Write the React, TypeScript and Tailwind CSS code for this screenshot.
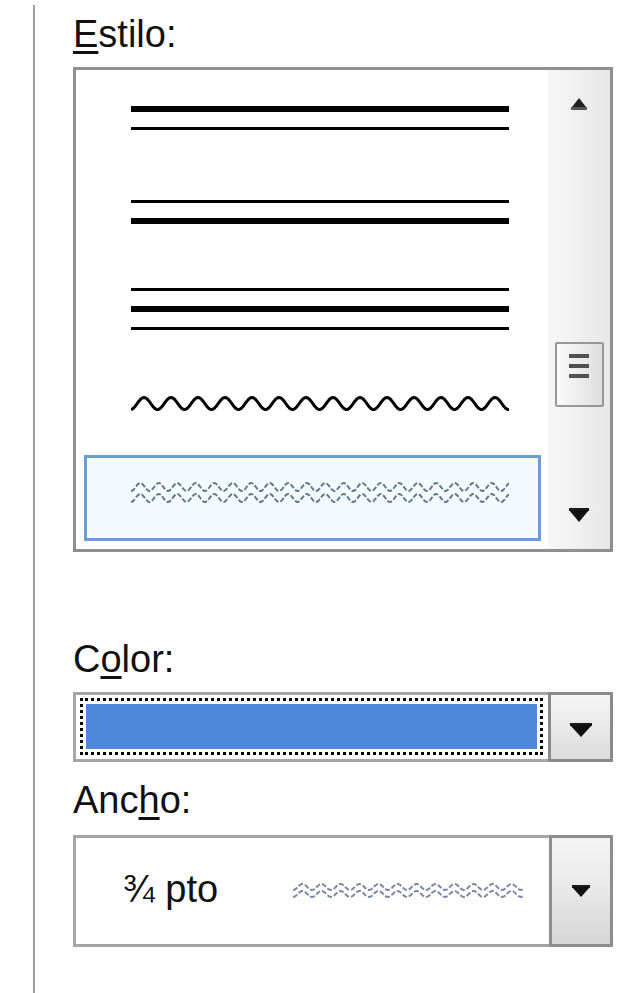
import React from 'react';

// builds a sine wave path for the border style previews
const wavePath = (width: number, period: number, amp: number, cy: number, peakAt: number) => {
  let d = '';
  for (let x = 0; x <= width; x += 1) {
    const y = cy - amp * Math.cos((2 * Math.PI * (x - peakAt)) / period);
    d += (x === 0 ? 'M' : 'L') + x + ' ' + y.toFixed(2) + ' ';
  }
  return d;
};

const ThinLine = () => <div className="h-[3px] w-[378px] bg-black" />;
const ThickLine = () => <div className="h-[6px] w-[378px] bg-black" />;

const DoubleWave: React.FC<{ width: number; height: number; period: number; amp: number; gap: number; color: string; stroke: number }> = ({
  width,
  height,
  period,
  amp,
  gap,
  color,
  stroke,
}) => {
  const top = amp + stroke / 2 + 1;
  return (
    <svg width={width} height={height} viewBox={`0 0 ${width} ${height}`}>
      <path d={wavePath(width, period, amp, top, period / 2)} fill="none" stroke={color} strokeWidth={stroke} strokeDasharray="5 2" />
      <path d={wavePath(width, period, amp, top + gap, period / 2)} fill="none" stroke={color} strokeWidth={stroke} strokeDasharray="5 2" />
    </svg>
  );
};

const DownTriangle: React.FC<{ w: number; h: number }> = ({ w, h }) => (
  <svg width={w} height={h} viewBox={`0 0 ${w} ${h}`}>
    <rect x={0} y={0} width={w} height={3} fill="#1a1a1a" />
    <polygon points={`0,2 ${w},2 ${w / 2},${h}`} fill="#111" />
  </svg>
);

export default function App() {
  return (
    <div className="w-[640px] h-[993px] bg-white flex font-['Liberation_Sans',Arial,sans-serif] text-[#111] overflow-hidden">
      <div className="ml-[33px] mt-[5px] flex-1 border-l-2 border-[#9e9e9e] pl-[38px] pr-[27px] pt-[10px]">
        {/* Estilo */}
        <div className="h-[38px] text-[38px] leading-none">
          <span className="underline decoration-[3px] underline-offset-[4px]">E</span>stilo:
        </div>

        <div className="mt-[14px] h-[485px] border-[3px] border-[#8f8f8f] flex">
          <div className="flex-1 flex flex-col pt-[1px]">
            <div className="h-[94px] flex flex-col justify-center pl-[55px] gap-[15px]">
              <ThickLine />
              <ThinLine />
            </div>
            <div className="h-[94px] flex flex-col justify-center pl-[55px] gap-[15px]">
              <ThinLine />
              <ThickLine />
            </div>
            <div className="h-[94px] flex flex-col justify-center pl-[55px] pt-[6px] gap-[15px]">
              <ThinLine />
              <ThickLine />
              <ThinLine />
            </div>
            <div className="h-[94px] flex items-center pl-[55px] pt-[7px]">
              <svg width={378} height={17} viewBox="0 0 378 17">
                <path d={wavePath(378, 27, 6, 8.5, 13)} fill="none" stroke="#000" strokeWidth={3} strokeLinejoin="round" />
              </svg>
            </div>
            <div className="pt-[8px] pl-[8px] pr-[7px]">
              <div className="h-[86px] border-[3px] border-[#6d9cd3] bg-[#f4fbfe] pl-[44px] pt-[23px]">
                <DoubleWave width={378} height={26} period={18.5} amp={4} gap={11} color="#66768e" stroke={2} />
              </div>
            </div>
          </div>

          {/* scrollbar */}
          <div className="w-[62px] bg-gradient-to-r from-[#f6f6f6] to-[#e8e8e8] flex flex-col items-center pt-[28px]">
            <svg width={16} height={12} viewBox="0 0 16 12">
              <polygon points="8,0 15,9 1,9" fill="#222" />
              <rect x={0} y={9} width={16} height={3} fill="#555" />
            </svg>
            <div className="mt-[232px] w-[49px] h-[65px] border-2 border-[#979797] rounded-[2px] bg-gradient-to-r from-[#fafafa] to-[#dedede] flex flex-col items-center pt-[10px] gap-[6px]">
              <div className="h-[4px] w-[20px] bg-[#505050]" />
              <div className="h-[4px] w-[20px] bg-[#505050]" />
              <div className="h-[4px] w-[20px] bg-[#505050]" />
            </div>
            <div className="mt-[101px]">
              <DownTriangle w={20} h={14} />
            </div>
          </div>
        </div>

        {/* Color */}
        <div className="mt-[88px] h-[38px] text-[38px] leading-none">
          C<span className="underline decoration-[3px] underline-offset-[4px]">o</span>lor:
        </div>
        <div className="mt-[14px] h-[70px] flex">
          <div className="flex-1 border-y-[3px] border-l-[3px] border-[#a5a5a5] pl-[4px] pt-[3px] pb-[4px] pr-[5px]">
            <div className="h-full border-[3px] border-dotted border-black p-[3px]">
              <div className="h-full bg-[#4f88d8]" />
            </div>
          </div>
          <div className="w-[65px] border-[3px] border-[#8a8a8a] bg-gradient-to-b from-[#f6f6f6] to-[#dcdcdc] flex items-center justify-center pt-[6px]">
            <DownTriangle w={22} h={14} />
          </div>
        </div>

        {/* Ancho */}
        <div className="mt-[19px] h-[38px] text-[38px] leading-none">
          Anc<span className="underline decoration-[3px] underline-offset-[4px]">h</span>o:
        </div>
        <div className="mt-[16px] h-[112px] flex">
          <div className="flex-1 border-y-[3px] border-l-[3px] border-[#a5a5a5] flex items-center pl-[47px] pb-[4px]">
            <span className="text-[38px] leading-none">¾ pto</span>
            <div className="ml-[75px] pt-[4px]">
              <DoubleWave width={231} height={18} period={19} amp={3} gap={7} color="#7a8aa3" stroke={2} />
            </div>
          </div>
          <div className="w-[64px] border-[3px] border-[#8d8d8d] bg-gradient-to-b from-[#f4f4f4] via-[#e8e8e8] to-[#d6d6d6] flex items-center justify-center">
            <DownTriangle w={18} h={12} />
          </div>
        </div>
      </div>
    </div>
  );
}
